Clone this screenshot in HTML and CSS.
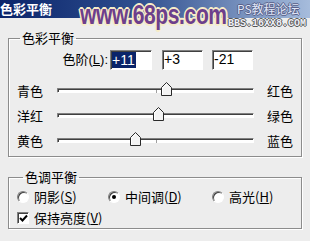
FILE: index.html
```html
<!DOCTYPE html>
<html lang="zh-CN">
<head>
  <meta charset="UTF-8">
  <title>色彩平衡</title>
  <link rel="stylesheet" href="styles.css">
</head>
<body>

<div class="titlebar">
  <span class="title">色彩平衡</span>
  <div class="mark-url">www.68ps.com</div>
  <div class="mark-cn">PS教程论坛</div>
  <div class="mark-bbs">BBS.16XX8.COM</div>
</div>

<div class="dialog">
  <fieldset class="group balance">
    <legend>色彩平衡</legend>

    <div class="levels">
      <label class="levels-label">色阶(<u>L</u>):</label>
      <span class="edit first"><span class="hl">+11</span></span>
      <span class="edit second">+3</span>
      <span class="edit third">-21</span>
    </div>

    <div class="slider-row">
      <span class="side">青色</span>
      <div class="track">
        <i class="tick"></i>
        <svg class="thumb" style="left:55.5%" width="11" height="14" viewBox="0 0 11 14"><polygon points="0.5,5.5 5.5,0.5 10.5,5.5 10.5,13.5 0.5,13.5" fill="#f3f3f3" stroke="#2a2a2a"/><polyline points="1.5,13 1.5,6 5.5,2" fill="none" stroke="#fff"/></svg>
      </div>
      <span class="side right">红色</span>
    </div>

    <div class="slider-row">
      <span class="side">洋红</span>
      <div class="track">
        <i class="tick"></i>
        <svg class="thumb" style="left:51.5%" width="11" height="14" viewBox="0 0 11 14"><polygon points="0.5,5.5 5.5,0.5 10.5,5.5 10.5,13.5 0.5,13.5" fill="#f3f3f3" stroke="#2a2a2a"/><polyline points="1.5,13 1.5,6 5.5,2" fill="none" stroke="#fff"/></svg>
      </div>
      <span class="side right">绿色</span>
    </div>

    <div class="slider-row">
      <span class="side">黄色</span>
      <div class="track">
        <i class="tick"></i>
        <svg class="thumb" style="left:39.5%" width="11" height="14" viewBox="0 0 11 14"><polygon points="0.5,5.5 5.5,0.5 10.5,5.5 10.5,13.5 0.5,13.5" fill="#f3f3f3" stroke="#2a2a2a"/><polyline points="1.5,13 1.5,6 5.5,2" fill="none" stroke="#fff"/></svg>
      </div>
      <span class="side right">蓝色</span>
    </div>
  </fieldset>

  <fieldset class="group tone">
    <legend>色调平衡</legend>

    <div class="radios">
      <label class="option w1"><span class="radio"></span>阴影(<u>S</u>)</label>
      <label class="option w2"><span class="radio on"></span>中间调(<u>D</u>)</label>
      <label class="option"><span class="radio"></span>高光(<u>H</u>)</label>
    </div>

    <label class="option check-row">
      <span class="checkbox"><svg width="9" height="9" viewBox="0 0 9 9"><polyline points="1,4 3.5,6.5 8,1.5" fill="none" stroke="#000" stroke-width="2"/></svg></span>保持亮度(<u>V</u>)
    </label>
  </fieldset>
</div>

</body>
</html>
```

FILE: styles.css
```css
body {
  margin: 0;
  width: 310px;
  height: 241px;
  overflow: hidden;
  background-color: #ededed;
  color: #000;
  font-family: "Liberation Sans", "Noto Sans CJK SC", sans-serif;
  font-size: 13px;
}

/* window title */
.titlebar {
  position: relative;
  z-index: 2;
  height: 18px;
  display: flex;
  align-items: center;
  background: linear-gradient(to right, #0a246a, #2f4f8f 45%, #a6bcdc);
}
.title {
  color: #fff;
  font-family: "Noto Sans CJK SC", sans-serif;
  font-weight: bold;
  font-size: 13px;
  line-height: 18px;
}
.mark-url {
  position: absolute;
  left: 80px;
  top: 2px;
  font: bold 27px/27px "Liberation Sans", sans-serif;
  color: #6d3f8c;
  transform: scaleX(0.78);
  transform-origin: left top;
  letter-spacing: -0.5px;
  text-shadow: 2px 0 #f6ecc8, -2px 0 #f6ecc8, 0 2px #f6ecc8, 0 -2px #f6ecc8,
    1px 1px #f6ecc8, -1px -1px #f6ecc8, 1px -1px #f6ecc8, -1px 1px #f6ecc8;
}
.mark-cn {
  position: absolute;
  left: 237px;
  top: 1px;
  font: 12px/15px "Noto Sans CJK SC", sans-serif;
  color: #dfe5f7;
  text-shadow: 1px 0 #5a6088, -1px 0 #5a6088, 0 1px #5a6088, 0 -1px #5a6088;
}
.mark-bbs {
  position: absolute;
  left: 228px;
  top: 18px;
  font: bold 10px/11px "Liberation Mono", monospace;
  color: #eef0f8;
  text-shadow: 1px 0 #555, -1px 0 #555, 0 1px #555, 0 -1px #555;
}

/* dialog body */
.dialog {
  padding: 13px 8px 0 8px;
}
.group {
  box-sizing: border-box;
  margin: 0;
  padding: 5px 4px 0 8px;
  border: 1px solid #8c8c8c;
  box-shadow: 1px 1px 0 #fff, inset 1px 1px 0 #fff;
}
.balance {
  height: 126px;
}
.group legend {
  margin-left: 3px;
  padding: 0 2px;
  font-family: "Noto Sans CJK SC", sans-serif;
  font-size: 13px;
  line-height: 14px;
}
.tone {
  height: 59px;
  margin-top: 13px;
}
.tone legend {
  margin-left: 6px;
}

/* level boxes */
.levels {
  display: flex;
  align-items: center;
  height: 20px;
}
.levels-label {
  margin-left: 40px;
  width: 51px;
  margin-right: 2px;
  text-align: right;
  line-height: 16px;
  white-space: nowrap;
}
.edit {
  box-sizing: border-box;
  flex-shrink: 0;
  height: 20px;
  width: 41px;
  padding: 0 1px;
  background: #fff;
  border: 1px solid;
  border-color: #808080 #fff #fff #808080;
  box-shadow: inset 1px 1px 0 #404040;
  font-size: 14px;
  line-height: 17px;
}
.edit.first {
  width: 42px;
  padding: 1px 0 0 1px;
}
.edit.second {
  margin-left: 10px;
}
.edit.third {
  margin-left: 9px;
}
.hl {
  display: inline-block;
  background: #0a246a;
  color: #fff;
  line-height: 16px;
  padding-right: 1px;
}

/* sliders */
.levels + .slider-row {
  margin-top: 8px;
}
.slider-row {
  display: flex;
  align-items: center;
  height: 25px;
}
.side {
  flex-shrink: 0;
  width: 40px;
  font-family: "Noto Sans CJK SC", sans-serif;
  line-height: 16px;
  white-space: nowrap;
}
.side.right {
  margin-left: 13px;
  width: auto;
}
.track {
  position: relative;
  flex-shrink: 0;
  box-sizing: border-box;
  width: 197px;
  height: 5px;
  background: #fff;
  border: 1px solid;
  border-color: #808080 #fff #fff #808080;
  box-shadow: inset 1px 1px 0 #404040;
  border-radius: 1px;
}
.tick {
  position: absolute;
  left: 50%;
  top: 1px;
  width: 1px;
  height: 3px;
  background: #a0a0a0;
}
.thumb {
  position: absolute;
  top: -7px;
  margin-left: -5.5px;
}

/* tone options */
.radios {
  display: flex;
  align-items: center;
  margin-top: 1px;
  height: 14px;
}
.option {
  display: flex;
  align-items: center;
  font-family: "Noto Sans CJK SC", sans-serif;
  line-height: 14px;
  white-space: nowrap;
}
.w1 {
  width: 91px;
}
.w2 {
  width: 104px;
}
.radio {
  position: relative;
  flex-shrink: 0;
  box-sizing: border-box;
  width: 12px;
  height: 12px;
  margin-right: 5px;
  border-radius: 50%;
  background: #fff;
  border: 1px solid;
  border-color: #808080 #fff #fff #808080;
  box-shadow: inset 1px 1px 0 #404040;
}
.radio.on::after {
  content: "";
  position: absolute;
  left: 3px;
  top: 3px;
  width: 4px;
  height: 4px;
  border-radius: 50%;
  background: #000;
}
.check-row {
  margin-top: 7px;
  height: 14px;
}
.checkbox {
  box-sizing: border-box;
  width: 12px;
  height: 12px;
  margin-right: 5px;
  display: flex;
  align-items: center;
  justify-content: center;
  background: #fff;
  border: 1px solid;
  border-color: #808080 #fff #fff #808080;
  box-shadow: inset 1px 1px 0 #404040;
}
```
